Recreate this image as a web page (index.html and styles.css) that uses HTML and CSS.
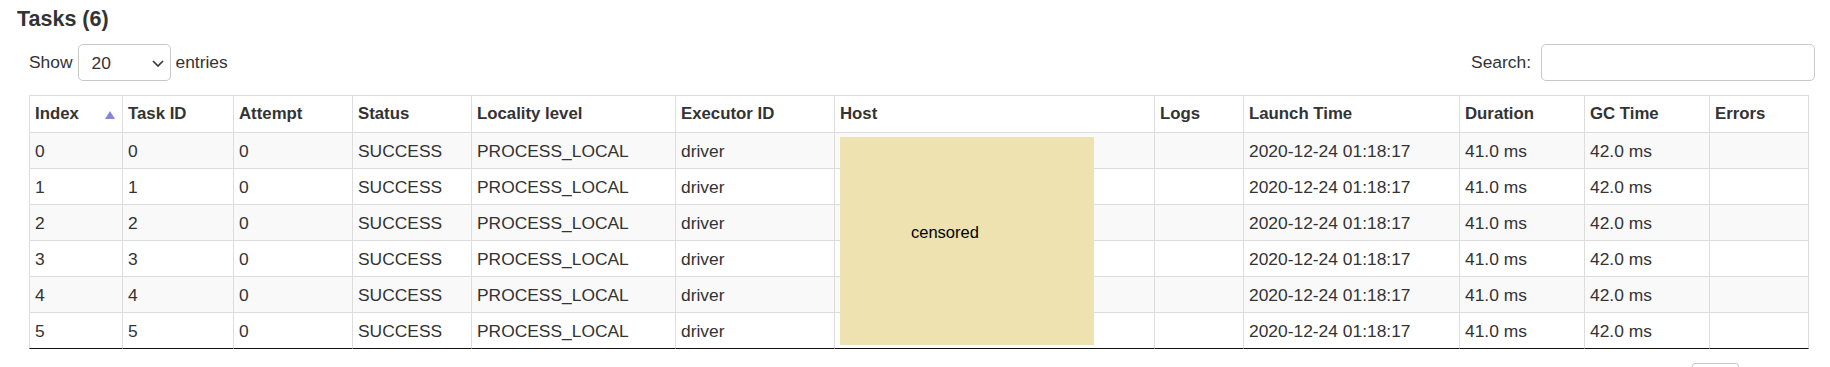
FILE: index.html
```html
<!DOCTYPE html>
<html>
<head>
<meta charset="utf-8">
<title>Tasks</title>
<link rel="stylesheet" href="styles.css">
</head>
<body>
<div class="page">
  <h4 class="title">Tasks (6)</h4>
  <div class="wrapper">
    <div class="controls">
      <div class="length">
        <span>Show</span>
        <div class="select"><span>20</span><svg class="chev" width="12" height="7" viewBox="0 0 12 7"><polyline points="1,1 6,6 11,1" fill="none" stroke="#333" stroke-width="1.6"/></svg></div>
        <span>entries</span>
      </div>
      <div class="search">
        <span>Search:</span>
        <div class="input"></div>
      </div>
    </div>
    <div class="table-wrap">
      <table class="tasks">
        <colgroup>
          <col class="c-index"><col class="c-task"><col class="c-attempt"><col class="c-status"><col class="c-locality"><col class="c-exec"><col class="c-host"><col class="c-logs"><col class="c-launch"><col class="c-dur"><col class="c-gc"><col class="c-err">
        </colgroup>
        <thead>
          <tr>
            <th class="sorted">Index<svg class="sort" width="10" height="8" viewBox="0 0 10 8"><polygon points="5,0 10,8 0,8" fill="#8585db"/></svg></th>
            <th>Task ID</th><th>Attempt</th><th>Status</th><th>Locality level</th><th>Executor ID</th><th>Host</th><th>Logs</th><th>Launch Time</th><th>Duration</th><th>GC Time</th><th class="last">Errors</th>
          </tr>
        </thead>
        <tbody>
          <tr class="odd"><td>0</td><td>0</td><td>0</td><td>SUCCESS</td><td>PROCESS_LOCAL</td><td>driver</td><td></td><td></td><td>2020-12-24 01:18:17</td><td>41.0 ms</td><td>42.0 ms</td><td class="last"></td></tr>
          <tr><td>1</td><td>1</td><td>0</td><td>SUCCESS</td><td>PROCESS_LOCAL</td><td>driver</td><td></td><td></td><td>2020-12-24 01:18:17</td><td>41.0 ms</td><td>42.0 ms</td><td class="last"></td></tr>
          <tr class="odd"><td>2</td><td>2</td><td>0</td><td>SUCCESS</td><td>PROCESS_LOCAL</td><td>driver</td><td></td><td></td><td>2020-12-24 01:18:17</td><td>41.0 ms</td><td>42.0 ms</td><td class="last"></td></tr>
          <tr><td>3</td><td>3</td><td>0</td><td>SUCCESS</td><td>PROCESS_LOCAL</td><td>driver</td><td></td><td></td><td>2020-12-24 01:18:17</td><td>41.0 ms</td><td>42.0 ms</td><td class="last"></td></tr>
          <tr class="odd"><td>4</td><td>4</td><td>0</td><td>SUCCESS</td><td>PROCESS_LOCAL</td><td>driver</td><td></td><td></td><td>2020-12-24 01:18:17</td><td>41.0 ms</td><td>42.0 ms</td><td class="last"></td></tr>
          <tr class="lastrow"><td>5</td><td>5</td><td>0</td><td>SUCCESS</td><td>PROCESS_LOCAL</td><td>driver</td><td></td><td></td><td>2020-12-24 01:18:17</td><td>41.0 ms</td><td>42.0 ms</td><td class="last"></td></tr>
        </tbody>
      </table>
      <div class="censor">censored</div>
    </div>
    <div class="pager"><span class="pbtn"></span></div>
  </div>
</div>
</body>
</html>
```

FILE: styles.css
```css
html, body {
  margin: 0;
  padding: 0;
  background: #fff;
}

body {
  font-family: "Liberation Sans", Arial, sans-serif;
  color: #333;
  font-size: 17.4px;
}

.page {
  padding: 7px 15px 0 17px;
}

.title {
  margin: 0;
  font-size: 21.5px;
  line-height: 24px;
  font-weight: bold;
  color: #333;
}

.wrapper {
  margin-left: 12px;
  margin-top: 13px;
}

.controls {
  display: flex;
  justify-content: space-between;
  align-items: center;
  height: 37px;
}

.length {
  display: flex;
  align-items: center;
  gap: 5px;
}

.select {
  box-sizing: border-box;
  width: 93px;
  height: 37px;
  border: 1px solid #c9c9c9;
  border-radius: 5px;
  display: flex;
  align-items: center;
  justify-content: space-between;
  padding: 2px 6px 0 13px;
}

.chev {
  display: block;
}

.search {
  display: flex;
  align-items: center;
  gap: 10px;
}

.input {
  box-sizing: border-box;
  width: 274px;
  height: 37px;
  border: 1px solid #c9c9c9;
  border-radius: 5px;
}

.table-wrap {
  position: relative;
  margin-top: 14px;
  width: 1780px;
}

.tasks {
  border-collapse: separate;
  border-spacing: 0;
  table-layout: fixed;
  width: 1780px;
}

.c-index { width: 93px; }
.c-task { width: 111px; }
.c-attempt { width: 119px; }
.c-status { width: 119px; }
.c-locality { width: 204px; }
.c-exec { width: 159px; }
.c-host { width: 320px; }
.c-logs { width: 89px; }
.c-launch { width: 216px; }
.c-dur { width: 125px; }
.c-gc { width: 125px; }
.c-err { width: 100px; }

.tasks th,
.tasks td {
  box-sizing: border-box;
  border-left: 1px solid #ddd;
  border-top: 1px solid #ddd;
  text-align: left;
  white-space: nowrap;
  overflow: hidden;
  padding: 0 5px;
}

.tasks th {
  height: 37px;
  line-height: 20px;
  font-size: 16.8px;
  font-weight: bold;
  color: #333;
  vertical-align: middle;
}

.tasks th.sorted {
  position: relative;
}

.sort {
  position: absolute;
  right: 7px;
  top: 15px;
}

.tasks td {
  height: 36px;
  line-height: 19px;
  font-size: 17.4px;
  vertical-align: middle;
  padding-top: 1px;
}

.tasks .last {
  border-right: 1px solid #ddd;
}

.tasks tr.odd td {
  background: #f9f9f9;
}

.tasks tr.lastrow td {
  height: 37px;
  border-bottom: 1px solid #111;
}

.censor {
  position: absolute;
  left: 811px;
  top: 42px;
  width: 254px;
  height: 208px;
  box-sizing: border-box;
  background: #ede2b0;
  color: #000;
  font-size: 16.5px;
  line-height: 18px;
  padding: 86px 0 0 71px;
}

.pager {
  display: flex;
  justify-content: flex-end;
  margin-top: 14px;
  padding-right: 76px;
}

.pbtn {
  box-sizing: border-box;
  width: 47px;
  height: 34px;
  border: 1px solid #c9c9c9;
  border-radius: 3px;
}
```
